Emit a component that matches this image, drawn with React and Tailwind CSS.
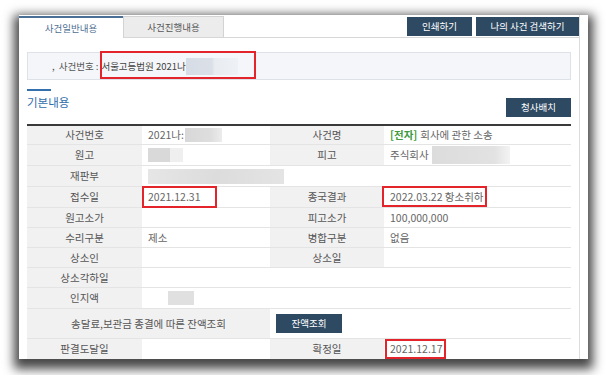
import React from "react";

const L = ({ children, className = "" }) => (
  <div className={`bg-[#f1f1f1] border-b border-[#e4e4e4] flex items-center justify-center text-[#555] ${className}`}>{children}</div>
);
const V = ({ children, className = "" }) => (
  <div className={`bg-white border-b border-[#e4e4e4] flex items-center pl-[6px] text-[#666] ${className}`}>{children}</div>
);

export default function App() {
  return (
    <div className="w-[606px] h-[375px] bg-white pl-[19px] pt-[15px] overflow-hidden font-['Noto_Sans_CJK_KR',sans-serif]">
      <div className="relative w-[569px] h-[344px] bg-white overflow-hidden shadow-[0_5px_10px_5px_rgba(0,0,0,0.72)]">
        <div className="w-[561px] h-full border-r border-[#dcdcdc]">
          {/* tab row */}
          <div className="flex items-end h-[23px] border-b border-[#d6d6d6]">
            <div className="w-[104px] border-t-2 border-[#4a6f96] bg-white -mb-px h-[22px] flex items-center justify-center text-[9.5px] text-[#4f6f94]">
              사건일반내용
            </div>
            <div className="w-[101px] h-[21px] bg-[#ececec] border border-b-0 border-[#d3d3d3] flex items-center justify-center text-[9.5px] text-[#555]">
              사건진행내용
            </div>
            <div className="flex-1" />
            <div className="flex gap-[4px] self-end mb-[1px]">
              <div className="w-[65px] h-[19px] bg-[#2e4a63] text-white text-[9.5px] flex items-center justify-center">인쇄하기</div>
              <div className="w-[103px] h-[19px] bg-[#2e4a63] text-white text-[9.5px] flex items-center justify-center">나의 사건 검색하기</div>
            </div>
          </div>

          <div className="px-[8px]">
            {/* case number box */}
            <div className="mt-[14px] h-[28px] bg-[#f4f6f9] border border-[#dde2e8] flex items-center pl-[24px] text-[9.5px] text-[#555]">
              <span className="mr-[4px]">,</span>
              <span>사건번호 :</span>
              <span className="ml-[3px] text-[#444]">서울고등법원 2021나</span>
              <span className="inline-block w-[52px] h-[17px] bg-[linear-gradient(90deg,#d6dce5_0%,#dbe0e8_50%,#e8ecf1_55%,#eef1f5_100%)]" />
            </div>

            {/* heading */}
            <div className="mt-[9px] flex justify-between items-end h-[28px]">
              <div className="flex flex-col self-start">
                <div className="w-[24px] h-[2px] bg-[#3470ae]" />
                <div className="mt-[4px] text-[11.5px] leading-[14px] text-[#2f6dac]">기본내용</div>
              </div>
              <div className="w-[65px] h-[19px] bg-[#2e4a63] text-white text-[9.5px] flex items-center justify-center">청사배치</div>
            </div>

            {/* table */}
            <div className="mt-[7px] border-t-2 border-[#3a3a3a] grid grid-cols-[115px_128px_114px_187px] grid-rows-[19px_21px_21px_21px_20px_20px_20px_20px_21px_30px_21px] text-[10.5px]">
              <L>사건번호</L>
              <V>2021나:<span className="inline-block ml-[1px] w-[37px] h-[14px] bg-[linear-gradient(90deg,#d8d8d8_0%,#dedede_70%,#ececec_100%)]" /></V>
              <L>사건명</L>
              <V><span className="text-[#3e9a3e] font-semibold">[전자]</span><span className="ml-[3px]">회사에 관한 소송</span></V>

              <L>원고</L>
              <V><span className="inline-block w-[22px] h-[14px] bg-[#d9d9d9]" /><span className="inline-block w-[13px] h-[14px] bg-[#efefef]" /></V>
              <L>피고</L>
              <V>주식회사<span className="inline-block ml-[3px] w-[78px] h-[18px] bg-[linear-gradient(90deg,#dcdcdc_0%,#e2e2e2_80%,#f3f3f3_100%)]" /></V>

              <L>재판부</L>
              <V className="col-span-3"><span className="inline-block w-[136px] h-[15px] bg-[linear-gradient(90deg,#e6e6e6_0%,#dcdcdc_50%,#e4e4e4_100%)]" /></V>

              <L>접수일</L>
              <V>2021.12.31</V>
              <L>종국결과</L>
              <V>2022.03.22 항소취하</V>

              <L>원고소가</L>
              <V></V>
              <L>피고소가</L>
              <V>100,000,000</V>

              <L>수리구분</L>
              <V>제소</V>
              <L>병합구분</L>
              <V>없음</V>

              <L>상소인</L>
              <V></V>
              <L>상소일</L>
              <V></V>

              <L>상소각하일</L>
              <V className="col-span-3"></V>

              <L>인지액</L>
              <V className="col-span-3 pl-[26px]"><span className="inline-block w-[26px] h-[14px] bg-[#e0e0e0]" /></V>

              <L className="col-span-2">송달료,보관금 종결에 따른 잔액조회</L>
              <V className="col-span-2 pl-[3px]">
                <div className="w-[66px] h-[19px] bg-[#2e4a63] text-white text-[9.5px] flex items-center justify-center">잔액조회</div>
              </V>

              <L>판결도달일</L>
              <V></V>
              <L>확정일</L>
              <V>2021.12.17</V>
            </div>
          </div>
        </div>

        {/* red annotation boxes */}
        <div className="absolute left-[81px] top-[36px] w-[156px] h-[28px] border-2 border-[#e3242b]" />
        <div className="absolute left-[123px] top-[171px] w-[75px] h-[22px] border-2 border-[#e3242b]" />
        <div className="absolute left-[363px] top-[171px] w-[105px] h-[21px] border-2 border-[#e3242b]" />
        <div className="absolute left-[366px] top-[324px] w-[61px] h-[20px] border-2 border-[#e3242b]" />
      </div>
    </div>
  );
}
